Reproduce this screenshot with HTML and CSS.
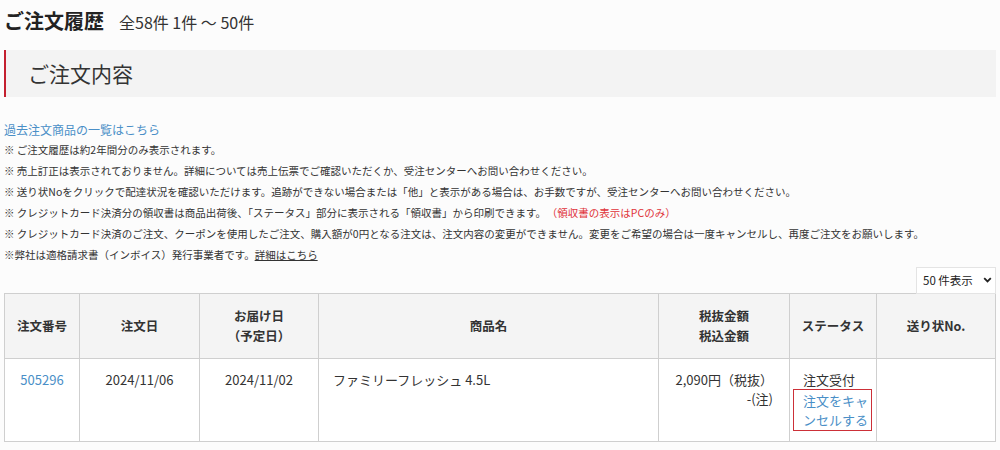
FILE: index.html
```html
<!DOCTYPE html>
<html lang="ja">
<head>
<meta charset="utf-8">
<link rel="stylesheet" href="styles.css">
</head>
<body>
<div class="page">
  <div class="title-row">
    <h1 class="title">ご注文履歴</h1>
    <span class="count">全58件 1件 ～ 50件</span>
  </div>
  <h2 class="section">ご注文内容</h2>
  <div class="notes">
    <a class="link past" href="#">過去注文商品の一覧はこちら</a>
    <p class="note">※ ご注文履歴は約2年間分のみ表示されます。</p>
    <p class="note">※ 売上訂正は表示されておりません。詳細については売上伝票でご確認いただくか、受注センターへお問い合わせください。</p>
    <p class="note">※ 送り状Noをクリックで配達状況を確認いただけます。追跡ができない場合または「他」と表示がある場合は、お手数ですが、受注センターへお問い合わせください。</p>
    <p class="note">※ クレジットカード決済分の領収書は商品出荷後、「ステータス」部分に表示される「領収書」から印刷できます。<span class="red">（領収書の表示はPCのみ）</span></p>
    <p class="note">※ クレジットカード決済のご注文、クーポンを使用したご注文、購入額が0円となる注文は、注文内容の変更ができません。変更をご希望の場合は一度キャンセルし、再度ご注文をお願いします。</p>
    <p class="note">※弊社は適格請求書（インボイス）発行事業者です。<a class="plain" href="#">詳細はこちら</a></p>
  </div>
  <div class="select-row">
    <div class="select-wrap">
      <select class="per-page"><option>50 件表示</option></select>
      <svg class="chev" width="9" height="6" viewBox="0 0 9 6"><path d="M1.2 1.2 L4.5 4.5 L7.8 1.2" fill="none" stroke="#222" stroke-width="1.8"/></svg>
    </div>
  </div>
  <table class="orders">
    <colgroup>
      <col style="width:75px"><col style="width:120px"><col style="width:119px"><col style="width:340px"><col style="width:131px"><col style="width:87px"><col>
    </colgroup>
    <thead>
      <tr>
        <th>注文番号</th>
        <th>注文日</th>
        <th>お届け日<br>（予定日）</th>
        <th>商品名</th>
        <th>税抜金額<br>税込金額</th>
        <th>ステータス</th>
        <th>送り状No.</th>
      </tr>
    </thead>
    <tbody>
      <tr>
        <td class="c"><a class="link" href="#">505296</a></td>
        <td class="c">2024/11/06</td>
        <td class="c">2024/11/02</td>
        <td class="name">ファミリーフレッシュ 4.5L</td>
        <td class="price">2,090円（税抜）<br>-(注)</td>
        <td class="status">注文受付<span class="cancel-box"><a class="cancel" href="#">注文をキャンセルする</a></span></td>
        <td></td>
      </tr>
    </tbody>
  </table>
</div>
</body>
</html>
```

FILE: styles.css
```css
* { box-sizing: border-box; }
html, body { margin: 0; padding: 0; }
body {
  background: #fcfcfc;
  color: #333;
  font-family: "Noto Sans CJK JP", "Noto Sans", sans-serif;
}
.page { width: 1000px; height: 450px; overflow: hidden; padding: 0 4px; }
.title-row { display: flex; align-items: baseline; gap: 15px; height: 50px; padding-top: 6px; }
.title { margin: 0; font-size: 20px; font-weight: 700; color: #222; line-height: 30px; }
.count { font-size: 16px; color: #333; }
.section {
  margin: 0;
  height: 47px;
  background: #f3f3f3;
  border-left: 2px solid #c4202f;
  padding-left: 22px;
  font-size: 21px;
  font-weight: 400;
  line-height: 47px;
  color: #333;
}
.notes { padding-top: 24px; }
.link { color: #4a8fc7; text-decoration: none; }
.past { display: block; font-size: 12px; line-height: 18px; }
.note { margin: 0; font-size: 10.5px; line-height: 21px; color: #333; white-space: nowrap; }
.red { color: #e0333a; margin-left: 6px; }
.plain { color: #333; text-decoration: underline; }
.select-row { display: flex; justify-content: flex-end; padding-top: 1px; }
.select-wrap { position: relative; width: 80px; height: 27px; }
.per-page {
  appearance: none;
  -webkit-appearance: none;
  width: 100%;
  height: 100%;
  background: #fff;
  border: 1px solid #e4e4e4;
  border-radius: 0;
  padding: 0 0 0 6px;
  font-family: inherit;
  font-size: 11.5px;
  color: #222;
}
.chev { position: absolute; right: 4px; top: 11px; pointer-events: none; }
.orders {
  width: 992px;
  border-collapse: collapse;
  table-layout: fixed;
  font-size: 13px;
}
.orders th, .orders td { border: 1px solid #cfcfcf; }
.orders th {
  background: #f4f4f4;
  height: 65px;
  font-weight: 700;
  font-size: 12.5px;
  line-height: 20px;
  color: #333;
  padding: 0;
}
.orders td {
  background: #fff;
  height: 83px;
  vertical-align: top;
  padding: 11px 14px 0;
  line-height: 19px;
  color: #333;
}
.orders td.c { text-align: center; padding-left: 0; padding-right: 0; }
.orders td.price { text-align: right; padding-right: 16px; }
.orders td.status { padding-left: 13px; padding-right: 0; }
.cancel-box {
  display: block;
  width: 79px;
  margin-left: -10px;
  padding: 1px 1px 1px 9px;
  border: 1px solid #cc3038;
}
.cancel { color: #4a8fc7; text-decoration: none; }
```
